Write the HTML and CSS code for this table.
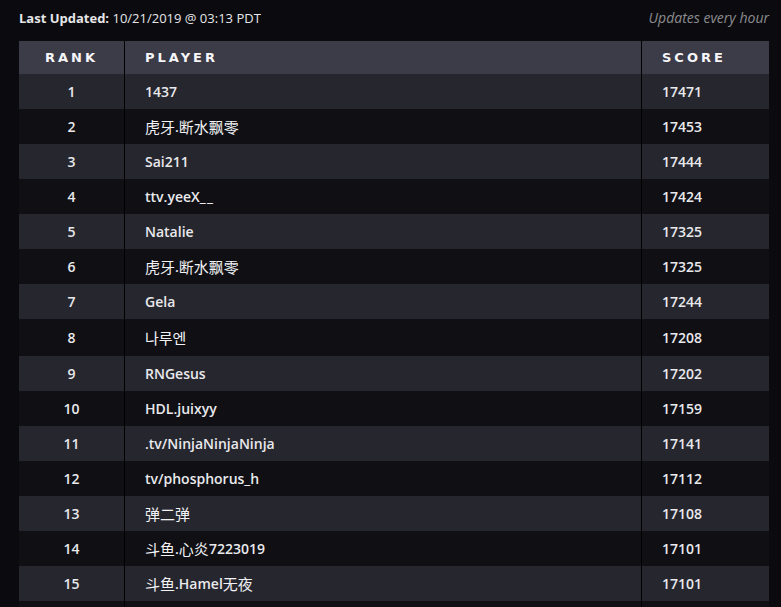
FILE: index.html
```html
<!DOCTYPE html>
<html>
<head>
<meta charset="utf-8">
<link rel="stylesheet" href="styles.css">
</head>
<body>
<div class="page">
  <div class="topbar">
    <div class="updated"><b>Last Updated:</b> 10/21/2019 @ 03:13 PDT</div>
    <div class="freq">Updates every hour</div>
  </div>
  <div class="board">
    <div class="row head"><div class="c rank">RANK</div><div class="c player">PLAYER</div><div class="c score">SCORE</div></div>
    <div class="row odd"><div class="c rank">1</div><div class="c player">1437</div><div class="c score">17471</div></div>
    <div class="row"><div class="c rank">2</div><div class="c player"><span class="han">虎牙</span>.<span class="han">断水飘零</span></div><div class="c score">17453</div></div>
    <div class="row odd"><div class="c rank">3</div><div class="c player">Sai211</div><div class="c score">17444</div></div>
    <div class="row"><div class="c rank">4</div><div class="c player">ttv.yeeX_&#8202;_</div><div class="c score">17424</div></div>
    <div class="row odd"><div class="c rank">5</div><div class="c player">Natalie</div><div class="c score">17325</div></div>
    <div class="row"><div class="c rank">6</div><div class="c player"><span class="han">虎牙</span>.<span class="han">断水飘零</span></div><div class="c score">17325</div></div>
    <div class="row odd"><div class="c rank">7</div><div class="c player">Gela</div><div class="c score">17244</div></div>
    <div class="row tall"><div class="c rank">8</div><div class="c player"><span class="hangul">나루엔</span></div><div class="c score">17208</div></div>
    <div class="row odd"><div class="c rank">9</div><div class="c player">RNGesus</div><div class="c score">17202</div></div>
    <div class="row"><div class="c rank">10</div><div class="c player">HDL.juixyy</div><div class="c score">17159</div></div>
    <div class="row odd"><div class="c rank">11</div><div class="c player">.tv/NinjaNinjaNinja</div><div class="c score">17141</div></div>
    <div class="row"><div class="c rank">12</div><div class="c player">tv/phosphorus_h</div><div class="c score">17112</div></div>
    <div class="row odd"><div class="c rank">13</div><div class="c player"><span class="han">弹二弹</span></div><div class="c score">17108</div></div>
    <div class="row"><div class="c rank">14</div><div class="c player"><span class="han">斗鱼</span>.<span class="han">心炎</span>7223019</div><div class="c score">17101</div></div>
    <div class="row odd"><div class="c rank">15</div><div class="c player"><span class="han">斗鱼</span>.Hamel<span class="han">无夜</span></div><div class="c score">17101</div></div>
    <div class="row"><div class="c rank"></div><div class="c player"></div><div class="c score"></div></div>
  </div>
</div>
</body>
</html>
```

FILE: styles.css
```css
html, body {
  margin: 0;
  padding: 0;
  background: #0b0b0f;
  overflow: hidden;
}
.page {
  padding: 0 12px 0 19px;
  font-family: "Open Sans", "Noto Sans", "Noto Sans CJK SC", sans-serif;
  color: #e9e9ec;
}
.topbar {
  display: flex;
  justify-content: space-between;
  align-items: center;
  padding-top: 9px;
  height: 18px;
  margin-bottom: 14px;
  font-size: 13px;
  line-height: 18px;
}
.updated {
  color: #e6e6e9;
}
.updated b {
  font-weight: 700;
}
.freq {
  font-style: italic;
  font-size: 14px;
  color: #8b8b90;
}
.board {
  display: flex;
  flex-direction: column;
}
.row {
  display: grid;
  grid-template-columns: 105px 517px 1fr;
  height: 35px;
  background: #0f0f14;
}
.row.odd {
  background: #26262e;
}
.row.tall {
  height: 37px;
}
.row.head {
  height: 33px;
  background: #3b3c48;
}
.c {
  display: flex;
  align-items: center;
  font-size: 14px;
  font-weight: 600;
  line-height: 20px;
  white-space: pre;
}
.c.rank {
  justify-content: center;
}
.c.player, .c.score {
  border-left: 1px solid #000;
  padding-left: 20px;
}
.han {
  font-family: "Noto Sans CJK SC", sans-serif;
  font-weight: 400;
  font-size: 15px;
  color: #f2f2f4;
}
.hangul {
  font-family: "Noto Sans CJK KR", sans-serif;
  font-weight: 400;
  font-size: 15px;
  color: #f2f2f4;
}
.head .c {
  font-family: "DejaVu Sans", sans-serif;
  font-weight: 700;
  font-size: 13px;
  letter-spacing: 3px;
  color: #f6f6f8;
}
```
